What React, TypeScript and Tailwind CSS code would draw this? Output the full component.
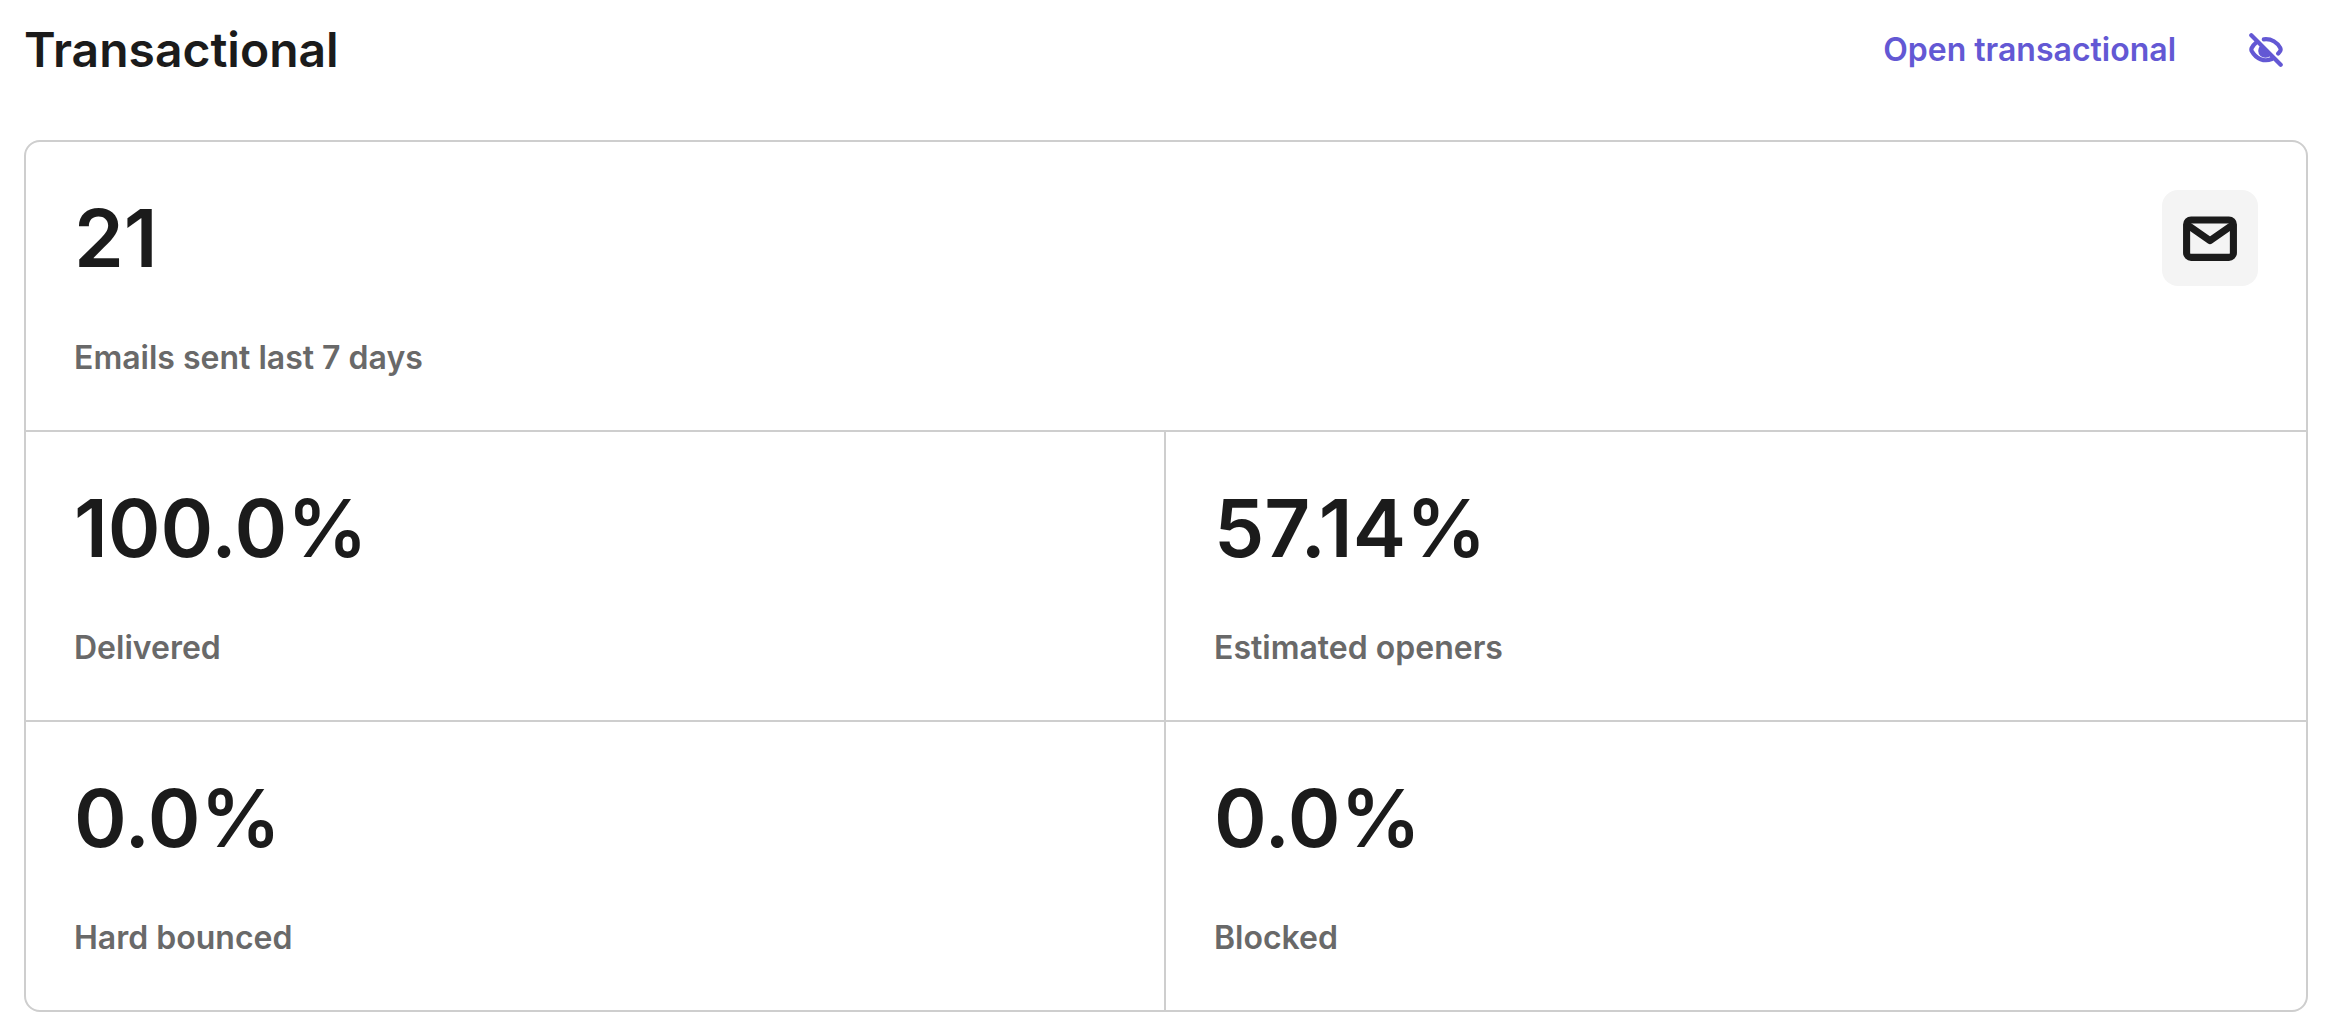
const stats = [
  { value: "100.0%", label: "Delivered" },
  { value: "57.14%", label: "Estimated openers" },
  { value: "0.0%", label: "Hard bounced" },
  { value: "0.0%", label: "Blocked" },
];

function EyeOffIcon() {
  return (
    <svg viewBox="0 0 34 34" className="size-[34px]" fill="none" stroke="currentColor" strokeWidth="4.2" strokeLinecap="round" strokeLinejoin="round" aria-hidden="true">
      <path d="M11 13 21.500 22.500A6.600 6.600 0 0 1 11 13Z" fill="currentColor" stroke="none" />
      <path d="M14.800 6.300C22.500 5.400 28.400 9.800 31.300 15Q32 16.600 31.200 18Q30.400 19.400 29.200 20.600" />
      <path d="M7.400 9.400Q4.600 11.600 2.700 15Q2 16.500 2.700 18C7 26 15.400 29.200 22.800 26" />
      <path d="M2.300 2.300 31.700 31.700" />
    </svg>
  );
}

function MailIcon() {
  return (
    <svg viewBox="0 0 54 45" className="h-[45px] w-[54px]" fill="none" stroke="currentColor" strokeWidth="7.1" strokeLinejoin="round" aria-hidden="true">
      <rect x="3.600" y="4" width="46.800" height="37.400" rx="4.500" />
      <path d="M4 8.600 27 24.600 50 8.600" />
    </svg>
  );
}

function Stat({ value, label }: { value: string; label: string }) {
  return (
    <div className="flex flex-col gap-12">
      <p className="text-[80px] leading-24 font-semibold text-[#1b1b1b]">{value}</p>
      <p className="text-[32px] leading-12 font-semibold text-[#696969]">{label}</p>
    </div>
  );
}

export default function App() {
  return (
    <main className="bg-white px-6 pb-[18px] font-['Inter',sans-serif]">
      <header className="mb-10 flex h-25 items-center justify-between">
        <h2 className="text-[48px] leading-16 font-semibold text-[#1b1b1b]">Transactional</h2>
        <div className="flex items-center gap-12">
          <a href="#transactional" className="text-[32px] leading-12 font-semibold text-[#6358d4]">
            Open transactional
          </a>
          <button type="button" aria-label="Hide transactional" className="flex size-21 items-center justify-center text-[#6358d4]">
            <EyeOffIcon />
          </button>
        </div>
      </header>
      <section className="overflow-hidden rounded-2xl border-2 border-[#cecece]">
        <div className="flex items-start justify-between p-12">
          <Stat value="21" label="Emails sent last 7 days" />
          <div className="flex size-24 items-center justify-center rounded-2xl bg-[#f4f4f4] text-[#1b1b1b]">
            <MailIcon />
          </div>
        </div>
        <div className="grid grid-cols-2">
          {stats.map((s) => (
            <div key={s.label} className="border-t-2 border-[#cecece] p-12 odd:border-r-2">
              <Stat value={s.value} label={s.label} />
            </div>
          ))}
        </div>
      </section>
    </main>
  );
}
